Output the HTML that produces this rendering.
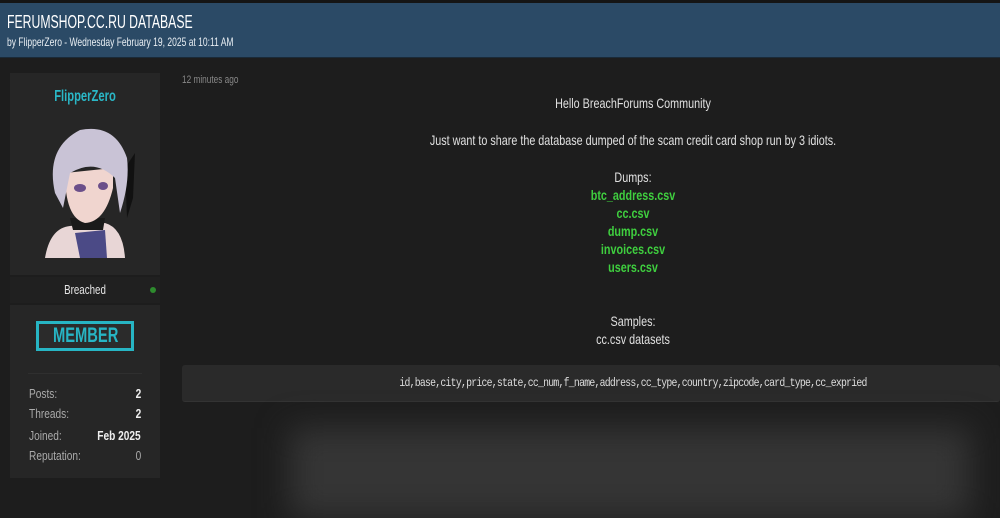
<!DOCTYPE html>
<html><head><style>
*{margin:0;padding:0;box-sizing:border-box}
body{width:1000px;height:500px;overflow:hidden;background:#1d1d1d;font-family:"Liberation Sans",sans-serif;color:#ddd;position:relative}
.top{position:absolute;left:0;top:0;width:1000px;height:3px;background:#151515}
.hdr{position:absolute;left:0;top:3px;width:1000px;height:55px;background:#2b4a66;border-bottom:1px solid #1a2a38}
.hdr h1{position:absolute;left:7px;top:9px;font-size:18px;font-weight:normal;color:#fff;white-space:nowrap;transform:scaleX(.68);transform-origin:left}
.hdr p{position:absolute;left:7px;top:32px;font-size:12px;color:#e8eef3;white-space:nowrap;transform:scaleX(.71);transform-origin:left}
.card{position:absolute;left:10px;width:150px;background:#262626}
.u{position:absolute;width:150px;text-align:center;top:15px;color:#2ab7c6;font-weight:bold;font-size:16px;transform:scaleX(.7)}
.br{position:absolute;left:10px;top:277px;width:150px;height:26px;background:#202020;font-size:13px;line-height:26px;color:#e5e5e5}
.br span.t{display:block;text-align:center;transform:scaleX(.75)}
.dot{position:absolute;right:4px;top:10px;width:6px;height:6px;border-radius:50%;background:#2e8b2e}
.badge{position:absolute;left:26px;top:16px;width:98px;height:30px;border:3px solid #27b5c4;background:#2b2b2b;color:#27b5c4;text-align:center;font-size:21px;line-height:24px;font-weight:bold}
.badge span{display:inline-block;transform:scaleX(.7)}
.hr{position:absolute;left:18px;top:68px;width:114px;height:1px;background:#2f2f2f}
.row{position:absolute;left:19px;width:112px;font-size:13px;color:#aaa}
.row i{font-style:normal;display:inline-block;transform:scaleX(.78);transform-origin:left}
.row b{position:absolute;right:0;color:#eee;font-weight:bold;transform:scaleX(.78);transform-origin:right}
.ago{position:absolute;left:182px;top:74px;font-size:11px;color:#888;transform:scaleX(.75);transform-origin:left}
.c{position:absolute;left:266px;width:734px;text-align:center;font-size:14px;color:#e0e0e0;transform:scaleX(.77)}
.g{color:#3fcf3f;font-weight:bold}
.code{position:absolute;left:182px;top:365px;width:818px;height:37px;background:#2a2a2a;border-radius:3px;border-bottom:1px solid #333}
.code div{position:absolute;left:84px;width:734px;text-align:center;font-family:"Liberation Mono",monospace;font-size:12px;line-height:37px;color:#ddd;letter-spacing:-0.9px;transform:scaleX(.815);white-space:nowrap}
.blur{position:absolute;left:290px;top:428px;width:680px;height:90px;background:#353535;filter:blur(16px)}
</style></head><body>
<div class="top"></div>
<div class="hdr"><h1>FERUMSHOP.CC.RU DATABASE</h1><p>by FlipperZero - Wednesday February 19, 2025 at 10:11 AM</p></div>
<div class="card" style="top:73px;height:202px">
<div class="u">FlipperZero</div>
<svg style="position:absolute;left:25px;top:45px" width="100" height="140" viewBox="0 0 100 140">
<path d="M90 50 L100 35 L98 80 L92 100Z" fill="#111"/>
<path d="M10 140 Q15 110 35 108 L70 105 Q88 110 90 140Z" fill="#e8d6d6"/>
<path d="M40 115 L70 112 L72 140 L45 140Z" fill="#4b4a86"/>
<path d="M35 100 L70 100 L68 112 L38 112Z" fill="#1a1a1a"/>
<path d="M30 55 Q30 100 50 105 Q70 104 78 70 L78 50Z" fill="#f0d5cf"/>
<path d="M20 75 Q10 30 45 12 Q80 5 92 40 Q95 65 85 95 L80 60 Q60 40 35 55 L28 90Z" fill="#c9c3d6"/>
<ellipse cx="45" cy="70" rx="6" ry="4" fill="#6b4f8a"/>
<ellipse cx="68" cy="68" rx="5" ry="4" fill="#6b4f8a"/>
</svg>
</div>
<div class="br"><span class="t">Breached</span><span class="dot"></span></div>
<div class="card" style="top:305px;height:173px">
<div class="badge"><span>MEMBER</span></div>
<div class="hr"></div>
<div class="row" style="top:81px"><i>Posts:</i><b>2</b></div>
<div class="row" style="top:101px"><i>Threads:</i><b>2</b></div>
<div class="row" style="top:123px"><i>Joined:</i><b>Feb 2025</b></div>
<div class="row" style="top:143px"><i>Reputation:</i><b style="color:#aaa;font-weight:normal">0</b></div>
</div>
<div class="ago">12 minutes ago</div>
<div class="c" style="top:95px">Hello BreachForums Community</div>
<div class="c" style="top:132px">Just want to share the database dumped of the scam credit card shop run by 3 idiots.</div>
<div class="c" style="top:168px;line-height:18px">Dumps:<br><span class="g">btc_address.csv</span><br><span class="g">cc.csv</span><br><span class="g">dump.csv</span><br><span class="g">invoices.csv</span><br><span class="g">users.csv</span></div>
<div class="c" style="top:312px;line-height:18px">Samples:<br>cc.csv datasets</div>
<div class="code"><div>id,base,city,price,state,cc_num,f_name,address,cc_type,country,zipcode,card_type,cc_expried</div></div>
<div class="blur"></div>
</body></html>
